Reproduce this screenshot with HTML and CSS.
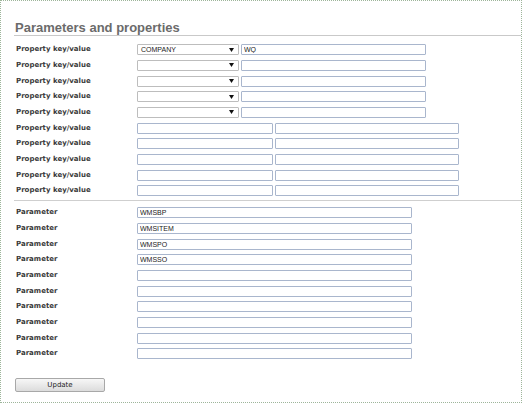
FILE: index.html
```html
<!DOCTYPE html>
<html>
<head>
<meta charset="utf-8">
<link rel="stylesheet" href="styles.css">
</head>
<body>
<div class="page">
  <h1 class="title">Parameters and properties</h1>
  <div class="grid">
    <label class="lbl">Property key/value</label>
    <div class="fields"><div class="select"><span>COMPANY</span><svg class="arrow" width="5" height="4" viewBox="0 0 5 4"><path d="M0 0H5L2.5 4Z" fill="#111"/></svg></div><input class="in w185" value="WQ"></div>
    <label class="lbl">Property key/value</label>
    <div class="fields"><div class="select"><span></span><svg class="arrow" width="5" height="4" viewBox="0 0 5 4"><path d="M0 0H5L2.5 4Z" fill="#111"/></svg></div><input class="in w185"></div>
    <label class="lbl">Property key/value</label>
    <div class="fields"><div class="select"><span></span><svg class="arrow" width="5" height="4" viewBox="0 0 5 4"><path d="M0 0H5L2.5 4Z" fill="#111"/></svg></div><input class="in w185"></div>
    <label class="lbl">Property key/value</label>
    <div class="fields"><div class="select"><span></span><svg class="arrow" width="5" height="4" viewBox="0 0 5 4"><path d="M0 0H5L2.5 4Z" fill="#111"/></svg></div><input class="in w185"></div>
    <label class="lbl">Property key/value</label>
    <div class="fields"><div class="select"><span></span><svg class="arrow" width="5" height="4" viewBox="0 0 5 4"><path d="M0 0H5L2.5 4Z" fill="#111"/></svg></div><input class="in w185"></div>
    <label class="lbl">Property key/value</label>
    <div class="fields"><input class="in w136"><input class="in w184"></div>
    <label class="lbl">Property key/value</label>
    <div class="fields"><input class="in w136"><input class="in w184"></div>
    <label class="lbl">Property key/value</label>
    <div class="fields"><input class="in w136"><input class="in w184"></div>
    <label class="lbl">Property key/value</label>
    <div class="fields"><input class="in w136"><input class="in w184"></div>
    <label class="lbl">Property key/value</label>
    <div class="fields"><input class="in w136"><input class="in w184"></div>
  </div>
  <div class="sep"></div>
  <div class="grid params">
    <label class="lbl">Parameter</label><div class="fields"><input class="in w275" value="WMSBP"></div>
    <label class="lbl">Parameter</label><div class="fields"><input class="in w275" value="WMSITEM"></div>
    <label class="lbl">Parameter</label><div class="fields"><input class="in w275" value="WMSPO"></div>
    <label class="lbl">Parameter</label><div class="fields"><input class="in w275" value="WMSSO"></div>
    <label class="lbl">Parameter</label><div class="fields"><input class="in w275"></div>
    <label class="lbl">Parameter</label><div class="fields"><input class="in w275"></div>
    <label class="lbl">Parameter</label><div class="fields"><input class="in w275"></div>
    <label class="lbl">Parameter</label><div class="fields"><input class="in w275"></div>
    <label class="lbl">Parameter</label><div class="fields"><input class="in w275"></div>
    <label class="lbl">Parameter</label><div class="fields"><input class="in w275"></div>
  </div>
  <div class="actions"><button class="btn">Update</button></div>
</div>
</body>
</html>
```
FILE: styles.css
```css
* { box-sizing: border-box; }
html, body { margin: 0; padding: 0; background: #fff; }
.page {
  width: 522px;
  height: 403px;
  border: 1px dotted #9db59a;
  padding: 0 0 0 13px;
  font-family: "DejaVu Sans", Verdana, sans-serif;
}
.title {
  margin: 0;
  padding: 20px 0 1px 1px;
  font-family: "Liberation Sans", Arial, sans-serif;
  font-size: 13px;
  line-height: 13px;
  font-weight: bold;
  color: #6b6b6b;
  border-bottom: 1px solid #c9c9c9;
}
.grid {
  display: grid;
  grid-template-columns: 123px 1fr;
  grid-auto-rows: 15.67px;
  align-items: center;
  margin-top: 6px;
}
.lbl {
  padding-left: 2px;
  font-size: 7px;
  font-weight: bold;
  color: #3a3a3a;
  line-height: 9px;
}
.fields {
  display: flex;
  gap: 2px;
  align-items: center;
}
.in {
  height: 11px;
  margin: 0;
  padding: 0 2px;
  border: 1px solid #a9b6cd;
  border-radius: 1px;
  background: #fff;
  font-family: "Liberation Sans", Arial, sans-serif;
  font-size: 7px;
  color: #222;
  outline: none;
}
.w185 { width: 185px; }
.w136 { width: 136px; }
.w184 { width: 184px; }
.w275 { width: 275px; }
.select {
  width: 102px;
  height: 11px;
  border: 1px solid #bdbdbd;
  border-radius: 1px;
  display: flex;
  align-items: center;
  justify-content: space-between;
  padding: 0 4px 0 3px;
  font-family: "Liberation Sans", Arial, sans-serif;
  font-size: 7px;
  color: #222;
}
.arrow { display: block; }
.sep {
  height: 1px;
  background: #cfcfcf;
  margin-top: 1px;
}
.params { margin-top: 4.4px; }
.actions { padding: 16px 0 0 1px; }
.btn {
  display: block;
  width: 90px;
  height: 14px;
  margin: 0;
  padding: 0;
  border: 1px solid #a8a8a8;
  border-radius: 2px;
  background: linear-gradient(#f7f7f7, #dcdcdc);
  font-family: "DejaVu Sans", Verdana, sans-serif;
  font-size: 7px;
  color: #222;
  line-height: 12px;
}
```
